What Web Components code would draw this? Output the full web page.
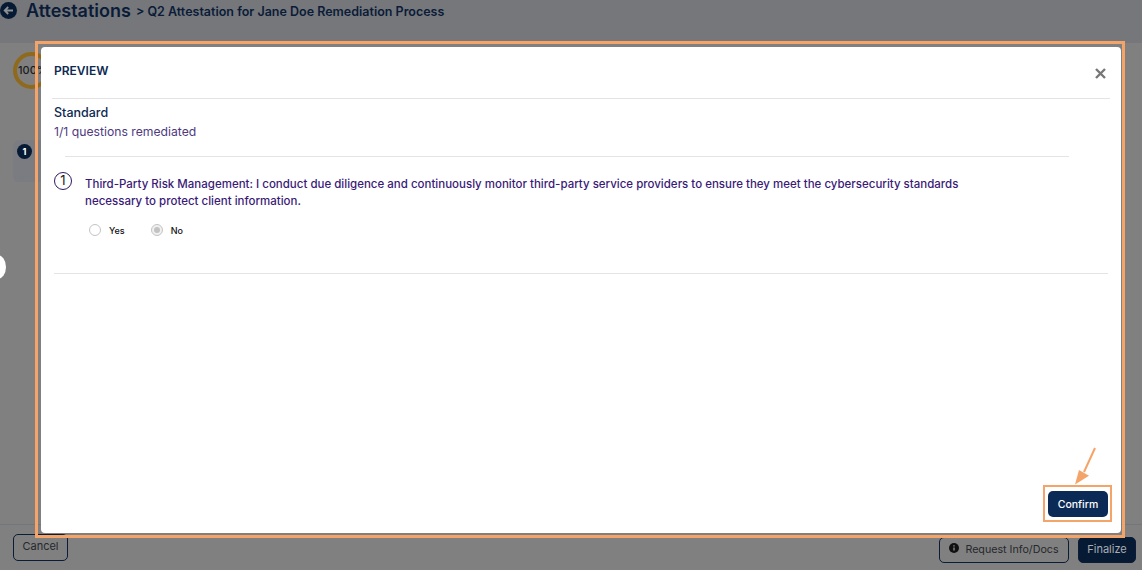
<!DOCTYPE html>
<html>
<head>
<meta charset="utf-8">
<title>Attestations</title>
<style>
  html, body { margin: 0; height: 100%; }
  body { font-family: Inter, "Liberation Sans", sans-serif; overflow: hidden; }
</style>
</head>
<body>
<attest-page>
  <attest-modal slot="modal"></attest-modal>
</attest-page>
<script>
class AttestPage extends HTMLElement {
  constructor() {
    super();
    this.attachShadow({ mode: 'open' });
    this.shadowRoot.innerHTML = `
      <style>
        :host {
          display: flex;
          flex-direction: column;
          position: relative;
          width: 1142px;
          height: 570px;
          overflow: hidden;
          background: #808080;
          color: #0a1c38;
        }
        header {
          flex: none;
          height: 43px;
          background: #76777b;
          display: flex;
          align-items: flex-start;
          padding-top: 1px;
          box-sizing: border-box;
        }
        .back { margin: 1px 0 0 0; }
        h1 {
          margin: 0 0 0 9px;
          font-size: 18px;
          line-height: 20px;
          font-weight: 600;
        }
        .crumb {
          margin: 3px 0 0 5px;
          font-size: 12.5px;
          line-height: 16px;
          font-weight: 600;
        }
        main { flex: 1; position: relative; display: flex; flex-direction: column; }
        .ring {
          box-sizing: border-box;
          width: 37px;
          height: 37px;
          margin: 9px 0 0 13px;
          border: 4px solid #8f6a1c;
          border-radius: 50%;
          font-size: 11px;
          font-weight: 500;
          line-height: 29px;
          white-space: nowrap;
          color: #1b1b1b;
          text-indent: 1px;
        }
        .step {
          box-sizing: border-box;
          width: 60px;
          height: 42px;
          margin: 51px 0 0 13px;
          padding: 4px 0 0 4px;
          background: #7a7c82;
          border-radius: 6px;
        }
        .num {
          width: 15px;
          height: 15px;
          border-radius: 50%;
          background: #071a33;
          color: #fff;
          font-size: 9px;
          font-weight: 700;
          line-height: 15px;
          text-align: center;
        }
        .handle {
          position: absolute;
          left: -11px;
          top: 212px;
          width: 17px;
          height: 24px;
          border-radius: 50%;
          background: #fff;
        }
        footer {
          flex: none;
          height: 46px;
          box-sizing: border-box;
          border-top: 1px solid #74767e;
          display: flex;
          align-items: flex-start;
          padding: 9px 6px 0 13px;
        }
        .btn {
          box-sizing: border-box;
          height: 27px;
          border: 1px solid #0a1c38;
          border-radius: 5px;
          font-size: 11px;
          line-height: 25px;
          color: #26282c;
          text-align: center;
          display: flex;
          justify-content: center;
          gap: 5px;
        }
        .cancel { width: 55px; line-height: 23px; }
        .info {
          width: 130px;
          margin-left: auto;
          margin-top: 3px;
          height: 26px;
          font-size: 10.7px;
          line-height: 23px;
          gap: 6px;
        }
        .info svg { margin-top: 5px; }
        .finalize {
          width: 58px;
          height: 26px;
          margin: 3px 0 0 9px;
          line-height: 23px;
          background: #071a33;
          color: #a9adb4;
        }
      </style>
      <header>
        <svg class="back" width="17" height="17" viewBox="0 0 17 17">
          <circle cx="8.5" cy="8.5" r="8.5" fill="#071a33"/>
          <path d="M13 8.5H5M8.2 5L4.7 8.5L8.2 12" fill="none" stroke="#8e9094" stroke-width="1.8"/>
        </svg>
        <h1>Attestations</h1>
        <div class="crumb">&gt; Q2 Attestation for Jane Doe Remediation Process</div>
      </header>
      <main>
        <div class="ring">100%</div>
        <div class="step"><div class="num">1</div></div>
        <div class="handle"></div>
      </main>
      <footer>
        <div class="btn cancel">Cancel</div>
        <div class="btn info">
          <svg width="10" height="10" viewBox="0 0 10 10">
            <circle cx="5" cy="5" r="5" fill="#111"/>
            <path d="M5 4.4V7.6M5 2.2V3.4" stroke="#8a8a8a" stroke-width="1.4"/>
          </svg>
          <span>Request Info/Docs</span>
        </div>
        <div class="btn finalize">Finalize</div>
      </footer>
      <slot name="modal"></slot>
    `;
  }
}
customElements.define('attest-page', AttestPage);

class AttestRadio extends HTMLElement {
  constructor() {
    super();
    this.attachShadow({ mode: 'open' });
    this.shadowRoot.innerHTML = `
      <style>
        :host {
          display: inline-flex;
          align-items: center;
          gap: 8px;
          font-size: 9px;
          font-weight: 500;
          color: #111;
        }
        i {
          box-sizing: border-box;
          width: 12px;
          height: 12px;
          border: 1px solid #c4c4c4;
          border-radius: 50%;
          background: #fff;
          display: flex;
          align-items: center;
          justify-content: center;
        }
        :host([checked]) i { background: #f0f0f0; }
        :host([checked]) i::after {
          content: '';
          width: 6px;
          height: 6px;
          border-radius: 50%;
          background: #c2c2c2;
        }
      </style>
      <i></i><slot></slot>
    `;
  }
}
customElements.define('attest-radio', AttestRadio);

class AttestModal extends HTMLElement {
  constructor() {
    super();
    this.attachShadow({ mode: 'open' });
    this.shadowRoot.innerHTML = `
      <style>
        :host {
          position: absolute;
          left: 35px;
          top: 41px;
          width: 1090px;
          height: 497px;
          box-sizing: border-box;
          display: flex;
          padding: 3px 1px 2px 3px;
          border: 3px solid #f5a469;
          color: #0c2a52;
        }
        .panel {
          flex: 1;
          display: flex;
          flex-direction: column;
          padding: 0 13px;
          background: #fff;
          border-radius: 4px;
        }
        .top {
          flex: none;
          height: 52px;
          box-sizing: border-box;
          margin: 0 -2px;
          padding: 0 2px;
          border-bottom: 1px solid #e4e4e4;
          display: flex;
          justify-content: space-between;
        }
        .title {
          margin: 17px 0 0 0;
          font-size: 12px;
          line-height: 14px;
          font-weight: 600;
        }
        .close { margin: 21px 2px 0 0; }
        .section {
          margin: 6px 0 0;
          font-size: 12.5px;
          line-height: 15px;
          font-weight: 500;
        }
        .count {
          margin: 4px 0 0;
          font-size: 12.2px;
          line-height: 15px;
          color: #4f3a80;
        }
        .rule {
          height: 1px;
          margin: 17px 39px 0 11px;
          background: #e4e4e4;
          flex: none;
        }
        .question { display: flex; margin-top: 15px; }
        .badge {
          flex: none;
          box-sizing: border-box;
          width: 18px;
          height: 18px;
          border: 1px solid #2d1b5e;
          border-radius: 50%;
          font-size: 13px;
          line-height: 14px;
          text-align: center;
          color: #1a1a1a;
        }
        .text {
          margin: 4px 0 0 13px;
          width: 890px;
          font-size: 11.5px;
          line-height: 17px;
          font-weight: 500;
          color: #3a1a78;
        }
        .options {
          display: flex;
          gap: 26px;
          margin: 14px 0 0 35px;
        }
        .end {
          height: 1px;
          margin-top: 37px;
          background: #e4e4e4;
          flex: none;
        }
        .actions { flex: 1; display: flex; align-items: flex-end; justify-content: flex-end; padding-bottom: 11px; }
        .confirm-wrap {
          position: relative;
          padding: 4px 2px 3px 3px;
          margin-right: -4px;
          border: 2px solid #f5a469;
          display: flex;
        }
        button {
          width: 60px;
          height: 26px;
          padding: 0;
          border: 0;
          border-radius: 5px;
          background: #0b2a55;
          color: #fff;
          font: 500 10.5px Inter, "Liberation Sans", sans-serif;
        }
        .arrow { position: absolute; left: 27px; top: -40px; }
      </style>
      <div class="panel">
        <div class="top">
          <div class="title">PREVIEW</div>
          <svg class="close" width="11" height="11" viewBox="0 0 11 11">
            <path d="M1 1L10 10M10 1L1 10" stroke="#777" stroke-width="2.4"/>
          </svg>
        </div>
        <div class="section">Standard</div>
        <div class="count">1/1 questions remediated</div>
        <div class="rule"></div>
        <div class="question">
          <div class="badge">1</div>
          <div class="text">Third-Party Risk Management: I conduct due diligence and continuously monitor third-party service providers to ensure they meet the cybersecurity standards necessary to protect client information.</div>
        </div>
        <div class="options">
          <attest-radio>Yes</attest-radio>
          <attest-radio checked>No</attest-radio>
        </div>
        <div class="end"></div>
        <div class="actions">
          <div class="confirm-wrap">
            <svg class="arrow" width="24" height="39" viewBox="0 0 24 39">
              <path d="M23 1L12 25" stroke="#f5a469" stroke-width="2" fill="none"/>
              <path d="M3 37.5L7 23L17 28.7Z" fill="#f5a469"/>
            </svg>
            <button>Confirm</button>
          </div>
        </div>
      </div>
    `;
  }
}
customElements.define('attest-modal', AttestModal);
</script>
</body>
</html>
